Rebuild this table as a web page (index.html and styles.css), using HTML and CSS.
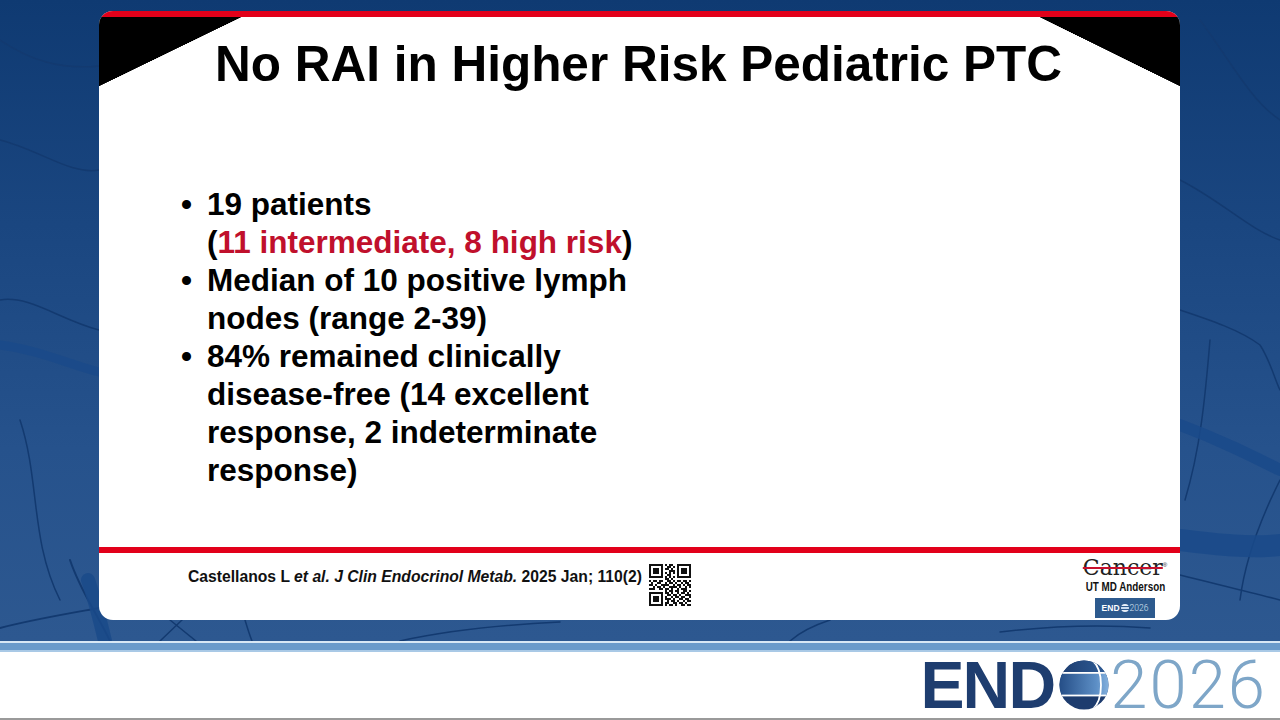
FILE: index.html
```html
<!DOCTYPE html>
<html>
<head>
<meta charset="utf-8">
<title>No RAI in Higher Risk Pediatric PTC</title>
<link rel="stylesheet" href="styles.css">
</head>
<body>
<div class="stage">
  <svg class="bg-lines" viewBox="0 0 1280 641" width="1280" height="641" aria-hidden="true">
    <g fill="none" stroke="#133a70" stroke-linecap="round">
      <path d="M0 140 C40 150 70 175 99 170" stroke-width="1.5"/>
      <path d="M0 300 C30 295 60 320 99 330" stroke-width="1.5"/>
      <path d="M20 420 C40 480 30 540 60 600" stroke-width="1.5"/>
      <path d="M0 628 C30 620 60 615 99 608" stroke-width="2"/>
      <path d="M70 560 C80 590 95 610 110 641" stroke-width="2"/>
      <path d="M160 641 L182 620 M170 620 L196 641" stroke-width="1.5"/>
      <path d="M245 620 C248 630 250 636 252 641" stroke-width="1.5"/>
      <path d="M400 641 C450 630 500 625 560 622" stroke-width="1.5"/>
      <path d="M790 641 C800 632 812 626 830 620" stroke-width="1.5"/>
      <path d="M1000 632 C1050 626 1100 624 1150 628" stroke-width="1.5"/>
      <path d="M1180 310 C1210 320 1240 330 1260 345 C1270 360 1275 380 1280 390" stroke-width="1.5"/>
      <path d="M1210 340 C1205 400 1200 450 1185 500" stroke-width="1.5"/>
      <path d="M1280 480 C1260 520 1245 560 1240 600" stroke-width="1.5"/>
      <path d="M1180 575 C1220 585 1250 592 1280 600" stroke-width="1.5"/>
      <path d="M1180 180 C1220 200 1250 230 1280 240" stroke-width="1.5"/>
      <path d="M1200 20 C1230 60 1250 100 1280 120" stroke-width="1.5"/>
      <path d="M0 40 C30 60 60 70 99 66" stroke-width="1.5"/>
    </g>
    <g fill="none" stroke="#1a4a8a" stroke-linecap="round" opacity="0.85">
      <path d="M0 345 C40 350 70 365 99 372" stroke-width="9"/>
      <path d="M88 580 C95 600 100 620 105 641" stroke-width="14"/>
      <path d="M1180 425 C1220 440 1250 455 1280 470" stroke-width="12"/>
      <path d="M1180 540 C1220 545 1250 548 1280 545" stroke-width="22"/>
    </g>
  </svg>

  <div class="slide">
    <div class="slide-top"></div>
    <header class="slide-head">
      <h1 class="title">No RAI in Higher Risk Pediatric PTC</h1>
    </header>

    <ul class="points">
      <li class="point"><span class="dot">•</span><span class="txt">19 patients<br>(<span class="hl">11 intermediate, 8 high risk</span>)</span></li>
      <li class="point"><span class="dot">•</span><span class="txt">Median of 10 positive lymph<br>nodes (range 2-39)</span></li>
      <li class="point"><span class="dot">•</span><span class="txt">84% remained clinically<br>disease-free (14 excellent<br>response, 2 indeterminate<br>response)</span></li>
    </ul>

    <div class="slide-rule"></div>

    <footer class="slide-foot">
      <div class="cite">
        <p class="cite-text">Castellanos L <i>et al. J Clin Endocrinol Metab.</i> 2025 Jan; 110(2)</p>
        <svg class="qr" viewBox="0 0 21 21" width="42" height="42" shape-rendering="crispEdges" aria-hidden="true">
          <rect width="21" height="21" fill="#fff"/>
          <path fill="#111" d="M0 0h7v1h-7zM8 0h1v1h-1zM10 0h2v1h-2zM14 0h7v1h-7z
          M0 1h1v1h-1zM6 1h1v1h-1zM9 1h2v1h-2zM12 1h1v1h-1zM14 1h1v1h-1zM20 1h1v1h-1z
          M0 2h1v1h-1zM2 2h3v1h-3zM6 2h1v1h-1zM8 2h2v1h-2zM11 2h1v1h-1zM14 2h1v1h-1zM16 2h3v1h-3zM20 2h1v1h-1z
          M0 3h1v1h-1zM2 3h3v1h-3zM6 3h1v1h-1zM10 3h3v1h-3zM14 3h1v1h-1zM16 3h3v1h-3zM20 3h1v1h-1z
          M0 4h1v1h-1zM2 4h3v1h-3zM6 4h1v1h-1zM8 4h1v1h-1zM10 4h1v1h-1zM12 4h1v1h-1zM14 4h1v1h-1zM16 4h3v1h-3zM20 4h1v1h-1z
          M0 5h1v1h-1zM6 5h1v1h-1zM9 5h2v1h-2zM14 5h1v1h-1zM20 5h1v1h-1z
          M0 6h7v1h-7zM8 6h1v1h-1zM10 6h1v1h-1zM12 6h1v1h-1zM14 6h7v1h-7z
          M8 7h2v1h-2zM11 7h1v1h-1z
          M0 8h1v1h-1zM2 8h2v1h-2zM5 8h2v1h-2zM9 8h2v1h-2zM12 8h1v1h-1zM14 8h2v1h-2zM17 8h2v1h-2zM20 8h1v1h-1z
          M1 9h1v1h-1zM4 9h2v1h-2zM8 9h1v1h-1zM10 9h2v1h-2zM13 9h1v1h-1zM16 9h1v1h-1zM18 9h2v1h-2z
          M0 10h2v1h-2zM3 10h1v1h-1zM6 10h4v1h-4zM12 10h1v1h-1zM14 10h2v1h-2zM17 10h1v1h-1zM19 10h2v1h-2z
          M2 11h1v1h-1zM4 11h2v1h-2zM7 11h1v1h-1zM10 11h4v1h-4zM15 11h1v1h-1zM18 11h1v1h-1zM20 11h1v1h-1z
          M0 12h3v1h-3zM5 12h2v1h-2zM8 12h2v1h-2zM11 12h1v1h-1zM14 12h1v1h-1zM16 12h3v1h-3z
          M8 13h1v1h-1zM10 13h2v1h-2zM13 13h2v1h-2zM17 13h2v1h-2zM20 13h1v1h-1z
          M0 14h7v1h-7zM8 14h2v1h-2zM11 14h1v1h-1zM14 14h1v1h-1zM16 14h2v1h-2zM19 14h1v1h-1z
          M0 15h1v1h-1zM6 15h1v1h-1zM9 15h2v1h-2zM12 15h2v1h-2zM15 15h1v1h-1zM18 15h3v1h-3z
          M0 16h1v1h-1zM2 16h3v1h-3zM6 16h1v1h-1zM8 16h1v1h-1zM11 16h1v1h-1zM13 16h2v1h-2zM16 16h2v1h-2zM20 16h1v1h-1z
          M0 17h1v1h-1zM2 17h3v1h-3zM6 17h1v1h-1zM8 17h3v1h-3zM12 17h1v1h-1zM15 17h2v1h-2zM18 17h2v1h-2z
          M0 18h1v1h-1zM2 18h3v1h-3zM6 18h1v1h-1zM9 18h1v1h-1zM11 18h2v1h-2zM14 18h1v1h-1zM17 18h1v1h-1zM19 18h2v1h-2z
          M0 19h1v1h-1zM6 19h1v1h-1zM8 19h2v1h-2zM12 19h2v1h-2zM15 19h2v1h-2zM18 19h1v1h-1z
          M0 20h7v1h-7zM8 20h1v1h-1zM10 20h2v1h-2zM13 20h1v1h-1zM16 20h2v1h-2zM19 20h2v1h-2z"/>
        </svg>
      </div>

      <div class="mda">
        <div class="mda-cancer"><span class="mda-word">Cancer</span><span class="mda-reg">®</span></div>
        <div class="mda-name">UT MD Anderson</div>
        <div class="mda-endo"><span class="me-end">END</span><span class="me-globe"></span><span class="me-year">2026</span></div>
      </div>
    </footer>
  </div>
</div>

<div class="stripe"></div>

<div class="brandbar">
  <div class="brand">
    <span class="brand-end">END</span>
    <svg class="globe" viewBox="0 0 50 50" width="50" height="50" aria-hidden="true">
      <defs>
        <clipPath id="gclip"><circle cx="25" cy="25" r="24.5"/></clipPath>
        <linearGradient id="gband" x1="0" y1="0" x2="1" y2="0">
          <stop offset="0" stop-color="#244d86"/>
          <stop offset="0.75" stop-color="#5d8fc6"/>
          <stop offset="1" stop-color="#86b2de"/>
        </linearGradient>
        <linearGradient id="gtop" x1="0" y1="0" x2="1" y2="0">
          <stop offset="0" stop-color="#1d3c6e"/>
          <stop offset="1" stop-color="#2f5d98"/>
        </linearGradient>
      </defs>
      <g clip-path="url(#gclip)">
        <rect width="50" height="50" fill="#1d3c6e"/>
        <rect y="0" width="50" height="12.5" fill="url(#gtop)"/>
        <rect y="13.5" width="50" height="21.5" fill="url(#gband)"/>
        <rect y="12" width="50" height="1.8" fill="#fff"/>
        <rect y="34.6" width="50" height="1.8" fill="#fff"/>
        <path d="M33 0 C45 10 45 40 33 50" fill="none" stroke="#fff" stroke-width="1.8"/>
      </g>
    </svg>
    <span class="brand-year">2026</span>
  </div>
</div>
</body>
</html>
```

FILE: styles.css
```css
* {
  box-sizing: border-box;
}

html,
body {
  margin: 0;
  padding: 0;
}

body {
  width: 1280px;
  height: 720px;
  overflow: hidden;
  background: #ffffff;
  font-family: "Liberation Sans", Arial, sans-serif;
  color: #000;
}

/* ---------- blue stage ---------- */
.stage {
  position: relative;
  height: 641px;
  padding: 11px 0 0 99px;
  background: linear-gradient(180deg, #0f3a72 0%, #1a4680 35%, #26528c 70%, #2d5890 100%);
  overflow: hidden;
}

.bg-lines {
  position: absolute;
  left: 0;
  top: 0;
}

/* ---------- slide card ---------- */
.slide {
  position: relative;
  width: 1081px;
  height: 609px;
  background: #ffffff;
  border-radius: 14px;
  overflow: hidden;
  display: flex;
  flex-direction: column;
}

.slide-top {
  height: 6px;
  background: #e2001a;
  flex: none;
}

.slide-head {
  flex: none;
  padding-top: 19px;
  background:
    linear-gradient(to bottom right, #000 50%, transparent 50.4%) left top / 142px 69px no-repeat,
    linear-gradient(to bottom left, #000 50%, transparent 50.4%) right top / 140px 69px no-repeat;
}

.title {
  margin: 0;
  text-align: center;
  font-size: 49.5px;
  line-height: 56px;
  font-weight: 700;
  color: #000;
  padding-right: 2px;
}

/* ---------- bullets ---------- */
.points {
  list-style: none;
  margin: 93px 0 0 82px;
  padding: 0;
  font-size: 31.5px;
  line-height: 38px;
  font-weight: 700;
}

.point {
  display: flex;
}

.dot {
  flex: none;
  width: 26px;
}

.txt {
  white-space: nowrap;
}

.hl {
  color: #c0102c;
}

/* ---------- footer ---------- */
.slide-rule {
  margin-top: auto;
  height: 6px;
  background: #e2001a;
  flex: none;
}

.slide-foot {
  flex: none;
  height: 67px;
  display: flex;
  justify-content: space-between;
  align-items: flex-start;
  padding: 0 13px 0 89px;
}

.cite {
  display: flex;
  align-items: flex-start;
  gap: 7px;
  padding-top: 11px;
}

.cite-text {
  margin: 4px 0 0;
  font-size: 15.7px;
  line-height: 18px;
  font-weight: 700;
  color: #111;
  white-space: nowrap;
}

.cite-text i {
  font-style: italic;
}

.qr {
  display: block;
  flex: none;
}

/* MD Anderson logo */
.mda {
  display: flex;
  flex-direction: column;
  align-items: center;
  padding-top: 3px;
  width: 84px;
}

.mda-cancer {
  display: flex;
  align-items: flex-start;
  font-family: "DejaVu Serif", "Liberation Serif", serif;
  font-size: 22px;
  line-height: 24px;
  color: #222;
}

.mda-word {
  text-decoration: line-through;
  text-decoration-color: #c8102e;
  text-decoration-thickness: 2px;
}

.mda-reg {
  font-family: "Liberation Sans", Arial, sans-serif;
  font-size: 6px;
  line-height: 10px;
  margin-top: 4px;
}

.mda-name {
  font-size: 12px;
  line-height: 14px;
  font-weight: 700;
  color: #111;
  white-space: nowrap;
  transform: scaleX(0.82);
  transform-origin: center;
}

.mda-endo {
  margin-top: 4px;
  width: 60px;
  height: 20px;
  background: #2d5a8e;
  display: flex;
  align-items: center;
  justify-content: center;
  gap: 1px;
  font-size: 8.5px;
  line-height: 1;
  color: #fff;
}

.me-end {
  font-weight: 700;
}

.me-globe {
  width: 8px;
  height: 8px;
  border-radius: 50%;
  background: linear-gradient(180deg, #e9f0f8 0 30%, #2d5a8e 30% 36%, #c8dbef 36% 64%, #2d5a8e 64% 70%, #e9f0f8 70%);
}

.me-year {
  font-family: Roboto, "Liberation Sans", sans-serif;
  font-weight: 300;
  color: #d6e4f2;
}

/* ---------- stripe + brand bar ---------- */
.stripe {
  height: 11px;
  background: linear-gradient(180deg, #d9e8f5 0 2px, #6b9bcb 2px 9px, #a9c9e6 9px 11px);
}

.brandbar {
  height: 68px;
  border-bottom: 2px solid #9a9a9a;
  display: flex;
  justify-content: flex-end;
  align-items: center;
  padding: 0 13px 0 0;
}

.brand {
  display: flex;
  align-items: center;
}

.brand-end {
  font-size: 66px;
  line-height: 58px;
  font-weight: 700;
  color: #1e3d6f;
  letter-spacing: -1.8px;
}

.globe {
  display: block;
  margin: 0 1px 0 5px;
}

.brand-year {
  font-family: Roboto, "Liberation Sans", sans-serif;
  font-weight: 300;
  font-size: 67px;
  line-height: 58px;
  color: #7ea6c8;
  letter-spacing: 2px;
}
```
